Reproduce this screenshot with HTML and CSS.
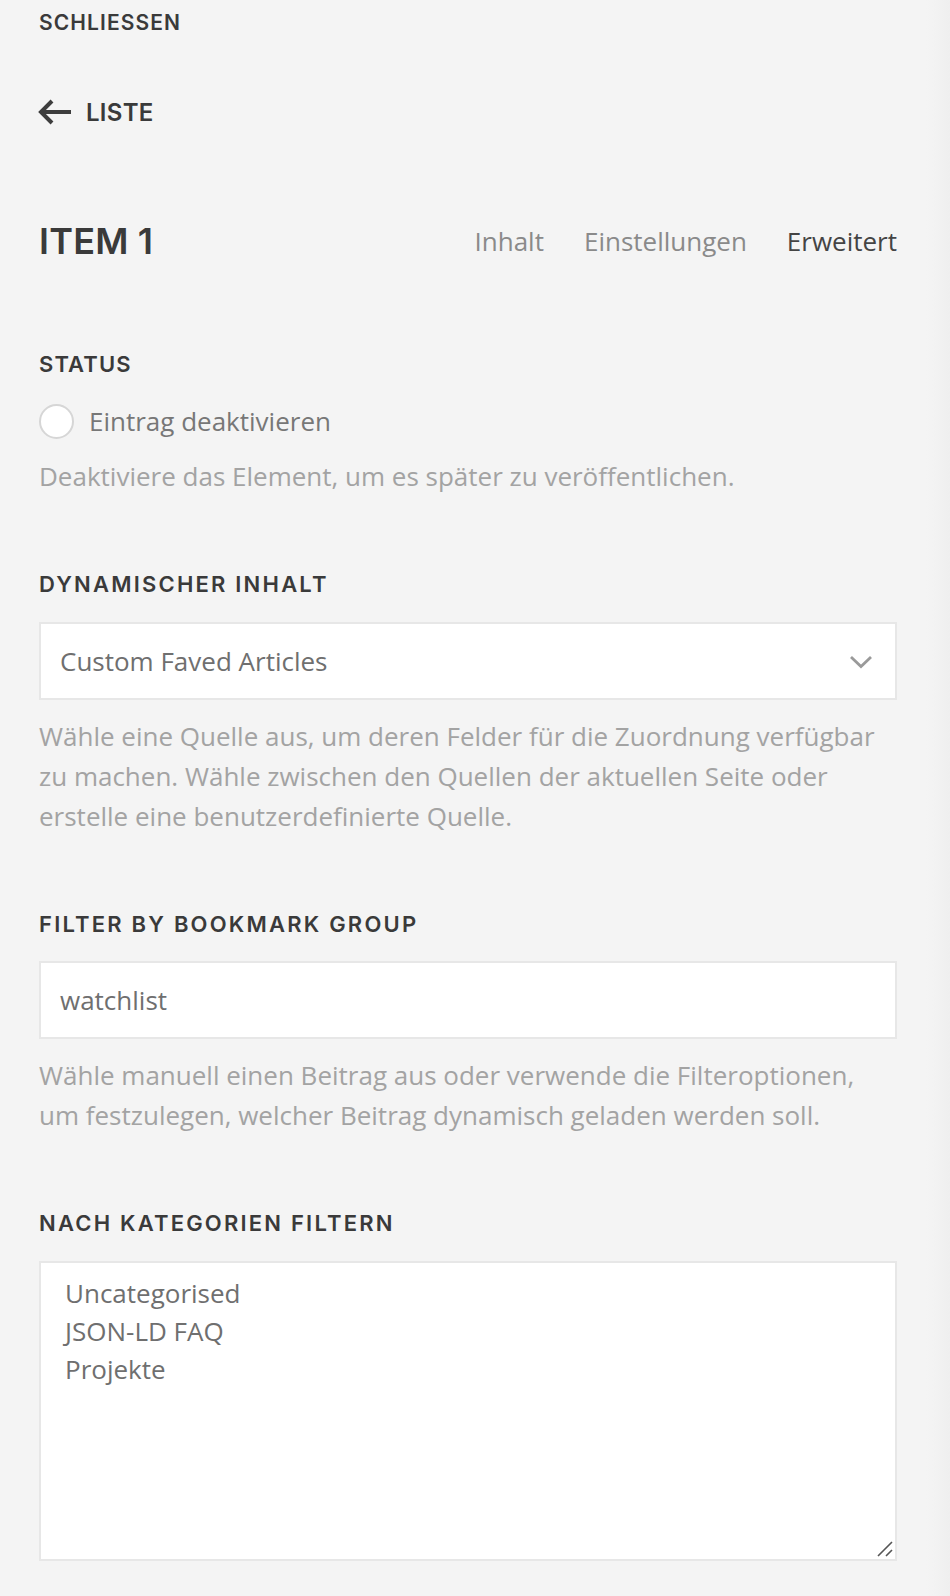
FILE: index.html
```html
<!DOCTYPE html>
<html lang="de">
<head>
<meta charset="utf-8">
<title>Item 1</title>
<link rel="stylesheet" href="styles.css">
</head>
<body>
<div class="panel">
  <div class="close">SCHLIESSEN</div>
  <div class="back">
    <svg class="back-icon" width="34" height="26" viewBox="0 0 34 26" aria-hidden="true">
      <path d="M33 13 H3 M14 2 L3 13 L14 24" fill="none" stroke="#3d3d3d" stroke-width="4" stroke-linecap="butt" stroke-linejoin="miter"/>
    </svg>
    <span>LISTE</span>
  </div>
  <div class="header">
    <h1 class="title">ITEM 1</h1>
    <nav class="tabs">
      <span class="tab">Inhalt</span>
      <span class="tab">Einstellungen</span>
      <span class="tab active">Erweitert</span>
    </nav>
  </div>

  <section class="field first">
    <h2 class="label">STATUS</h2>
    <div class="radio-row">
      <span class="radio"></span>
      <span class="radio-text">Eintrag deaktivieren</span>
    </div>
    <p class="desc radio-desc">Deaktiviere das Element, um es später zu veröffentlichen.</p>
  </section>

  <section class="field">
    <h2 class="label">DYNAMISCHER INHALT</h2>
    <div class="box select">
      <span>Custom Faved Articles</span>
      <svg class="chevron" width="24" height="14" viewBox="0 0 24 14" aria-hidden="true">
        <path d="M2 2 L12 11.5 L22 2" fill="none" stroke="#9a9a9a" stroke-width="2.8"/>
      </svg>
    </div>
    <p class="desc">Wähle eine Quelle aus, um deren Felder für die Zuordnung verfügbar zu machen. Wähle zwischen den Quellen der aktuellen Seite oder erstelle eine benutzerdefinierte Quelle.</p>
  </section>

  <section class="field">
    <h2 class="label">FILTER BY BOOKMARK GROUP</h2>
    <div class="box input">watchlist</div>
    <p class="desc">Wähle manuell einen Beitrag aus oder verwende die Filteroptionen, um festzulegen, welcher Beitrag dynamisch geladen werden soll.</p>
  </section>

  <section class="field">
    <h2 class="label">NACH KATEGORIEN FILTERN</h2>
    <div class="box multi">
      <div class="opt">Uncategorised</div>
      <div class="opt">JSON-LD FAQ</div>
      <div class="opt">Projekte</div>
      <svg class="grip" width="16" height="16" viewBox="0 0 16 16" aria-hidden="true">
        <path d="M1 15 L15 1 M9 15 L15 9" fill="none" stroke="#555" stroke-width="1.6"/>
      </svg>
    </div>
  </section>
</div>
</body>
</html>
```

FILE: styles.css
```css
* { box-sizing: border-box; }

html, body {
  margin: 0;
  padding: 0;
}

body {
  width: 950px;
  min-height: 1596px;
  background: linear-gradient(to left, #efefef 0, #f3f3f3 18px, #f4f4f4 24px);
  font-family: "Open Sans", "Liberation Sans", sans-serif;
  color: #444;
}

.panel {
  padding: 8px 53px 0 39px;
}

.close {
  font-family: "Inter", "Noto Sans", sans-serif;
  font-weight: 600;
  font-size: 21px;
  line-height: 30px;
  letter-spacing: 1.1px;
  color: #3a3a3a;
}

.back {
  display: flex;
  align-items: center;
  gap: 14px;
  height: 40px;
  margin-top: 54px;
  font-family: "Inter", "Noto Sans", sans-serif;
  font-weight: 600;
  font-size: 24px;
  letter-spacing: 0.3px;
  color: #3a3a3a;
}

.back-icon {
  display: block;
  margin-left: -1px;
}

.header {
  display: flex;
  align-items: center;
  justify-content: space-between;
  height: 50px;
  margin-top: 84px;
}

.title {
  margin: 0;
  font-family: "Inter", "Noto Sans", sans-serif;
  font-weight: 600;
  font-size: 36px;
  line-height: 50px;
  color: #3a3a3a;
  letter-spacing: 0.2px;
}

.tabs {
  display: flex;
  gap: 40px;
  font-size: 26px;
  line-height: 50px;
}

.tab { color: #8a8a8a; }
.tab.active { color: #444; }

.field { margin-top: 73px; }
.field.first { margin-top: 83px; }

.label {
  margin: 0;
  font-family: "Inter", "Noto Sans", sans-serif;
  font-weight: 600;
  font-size: 22px;
  line-height: 30px;
  letter-spacing: 2.2px;
  color: #3a3a3a;
}

.field.first .label { letter-spacing: 1.1px; }

.radio-row {
  display: flex;
  align-items: center;
  gap: 15px;
  height: 40px;
  margin-top: 22px;
}

.radio {
  width: 35px;
  height: 35px;
  border-radius: 50%;
  border: 2px solid #d6d6d6;
  background: #fff;
  flex: none;
}

.radio-text {
  font-size: 26px;
  color: #777;
}

.desc {
  margin: 16px 0 0;
  font-size: 26px;
  line-height: 40px;
  color: #a3a3a3;
}

.desc.radio-desc { margin-top: 15px; }

.box {
  margin-top: 22.5px;
  background: #fff;
  border: 2px solid #e7e7e7;
  font-size: 26px;
  color: #6f6f6f;
}

.select, .input {
  display: flex;
  align-items: center;
  height: 78px;
  padding: 0 22px 0 19px;
}

.select { justify-content: space-between; }

.chevron { display: block; margin-top: 2px; }

.multi {
  position: relative;
  height: 300px;
  padding: 11px 24px 0 24px;
  line-height: 38px;
  overflow: hidden;
}

.grip {
  position: absolute;
  right: 2px;
  bottom: 2px;
  display: block;
}
```
